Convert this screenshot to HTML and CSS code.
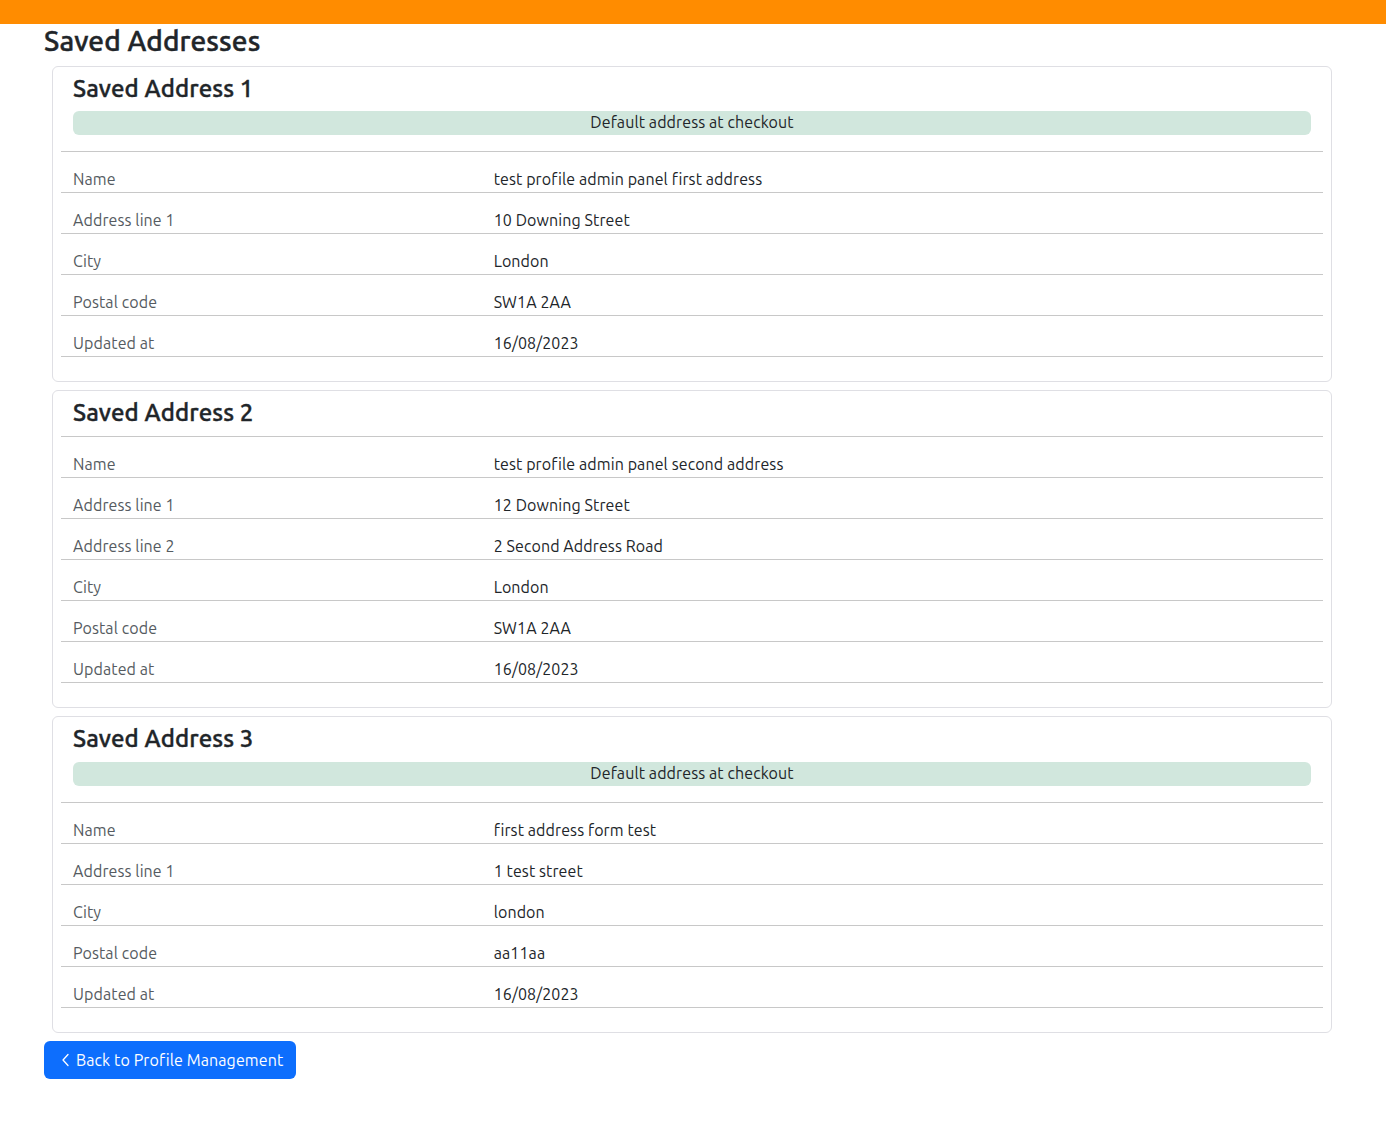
FILE: index.html
```html
<!DOCTYPE html>
<html lang="en">
<head>
<meta charset="utf-8">
<title>Saved Addresses</title>
<link rel="stylesheet" href="styles.css">
</head>
<body>
<div class="topbar"></div>
<main class="page">
  <h1 class="page-title">Saved Addresses</h1>

  <section class="card">
    <h2 class="card-title">Saved Address 1</h2>
    <div class="badge-default">Default address at checkout</div>
    <div class="rows">
      <div class="row"><div class="label">Name</div><div class="value">test profile admin panel first address</div></div>
      <div class="row"><div class="label">Address line 1</div><div class="value">10 Downing Street</div></div>
      <div class="row"><div class="label">City</div><div class="value">London</div></div>
      <div class="row"><div class="label">Postal code</div><div class="value">SW1A 2AA</div></div>
      <div class="row"><div class="label">Updated at</div><div class="value">16/08/2023</div></div>
    </div>
  </section>

  <section class="card">
    <h2 class="card-title">Saved Address 2</h2>
    <div class="rows">
      <div class="row"><div class="label">Name</div><div class="value">test profile admin panel second address</div></div>
      <div class="row"><div class="label">Address line 1</div><div class="value">12 Downing Street</div></div>
      <div class="row"><div class="label">Address line 2</div><div class="value">2 Second Address Road</div></div>
      <div class="row"><div class="label">City</div><div class="value">London</div></div>
      <div class="row"><div class="label">Postal code</div><div class="value">SW1A 2AA</div></div>
      <div class="row"><div class="label">Updated at</div><div class="value">16/08/2023</div></div>
    </div>
  </section>

  <section class="card">
    <h2 class="card-title">Saved Address 3</h2>
    <div class="badge-default">Default address at checkout</div>
    <div class="rows">
      <div class="row"><div class="label">Name</div><div class="value">first address form test</div></div>
      <div class="row"><div class="label">Address line 1</div><div class="value">1 test street</div></div>
      <div class="row"><div class="label">City</div><div class="value">london</div></div>
      <div class="row"><div class="label">Postal code</div><div class="value">aa11aa</div></div>
      <div class="row"><div class="label">Updated at</div><div class="value">16/08/2023</div></div>
    </div>
  </section>

  <a class="btn-back" href="#">
    <svg class="chev" width="12" height="16" viewBox="0 0 12 16" aria-hidden="true"><polyline points="8,2.5 3,8 8,13.5" fill="none" stroke="#fff" stroke-width="1.3" stroke-linecap="round" stroke-linejoin="round"/></svg>
    <span>Back to Profile Management</span>
  </a>
</main>
</body>
</html>
```

FILE: styles.css
```css
* { box-sizing: border-box; }
html, body { margin: 0; padding: 0; }
body {
  font-family: Ubuntu, "Noto Sans", "Open Sans", sans-serif;
  color: #212529;
  background: #fff;
  font-size: 16px;
  line-height: 1.5;
  letter-spacing: 0.1px;
}
.topbar {
  height: 24px;
  background: #ff8c00;
}
.page {
  width: 1386px;
  padding: 0 46px 40px 44px;
  display: flex;
  flex-direction: column;
  align-items: flex-start;
}
.page-title {
  margin: 0 0 8px 0;
  font-size: 28px;
  font-weight: 500;
  line-height: 1.2;
  letter-spacing: 0.1px;
  -webkit-text-stroke: 0.45px #212529;
}
.card {
  align-self: stretch;
  margin: 0 8px 8px 8px;
  border: 1px solid #dfdfe4;
  border-radius: 6px;
  padding: 8px;
}
.card-title {
  margin: 0 0 8px 0;
  padding: 0 12px;
  font-size: 24px;
  font-weight: 500;
  line-height: 1.2;
  letter-spacing: 0.1px;
  -webkit-text-stroke: 0.4px #212529;
}
.badge-default {
  margin: 0 12px 16px 12px;
  height: 24px;
  line-height: 22px;
  padding-bottom: 2px;
  background: #d1e7dd;
  border-radius: 6px;
  text-align: center;
  font-size: 16px;
  color: #212529;
}
.rows {
  border-top: 1px solid #c8c8c8;
  margin-bottom: 16px;
}
.row {
  display: grid;
  grid-template-columns: 1fr 2fr;
  border-bottom: 1px solid #c8c8c8;
  padding-top: 15px;
  padding-bottom: 1px;
  line-height: 24px;
}
.label {
  padding: 0 12px;
  color: #555b61;
}
.value {
  padding: 0 12px;
  color: #212529;
}
.btn-back {
  display: flex;
  align-items: center;
  gap: 4px;
  height: 38px;
  width: 252px;
  padding: 0 12px 0 16px;
  background: #0d6efd;
  color: #fff;
  border-radius: 6px;
  text-decoration: none;
  font-size: 16px;
  white-space: nowrap;
}
.chev { flex: none; }
```
